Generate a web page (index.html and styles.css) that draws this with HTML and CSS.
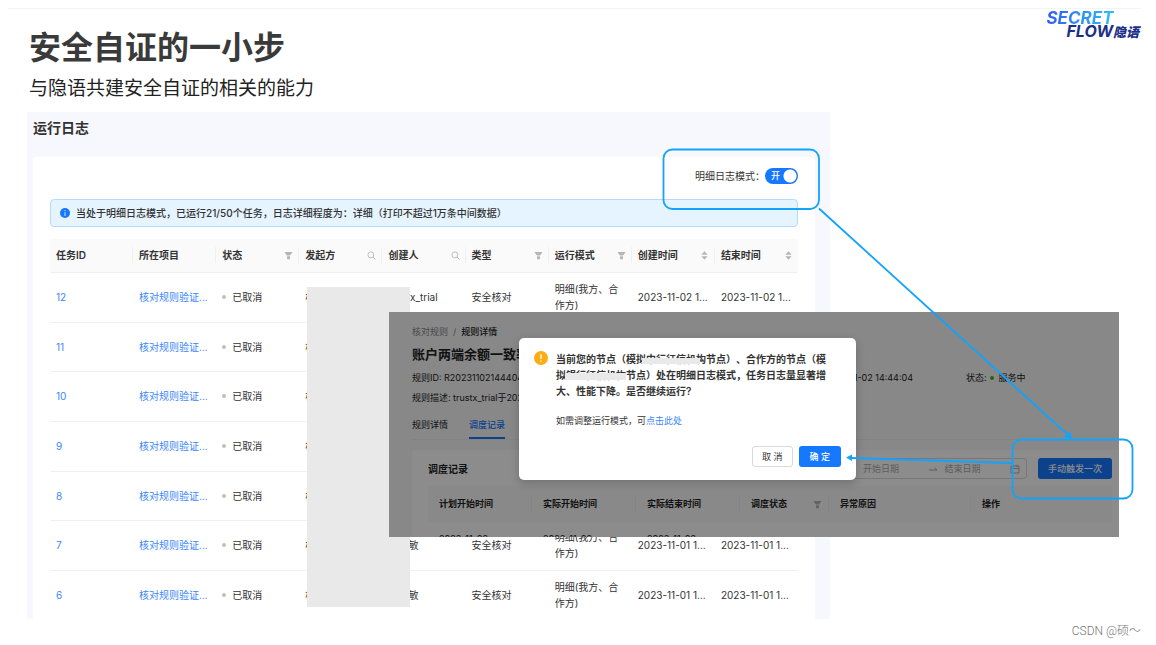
FILE: index.html
```html
<!DOCTYPE html>
<html lang="zh-CN">
<head>
<meta charset="utf-8">
<title>安全自证的一小步</title>
<link rel="stylesheet" href="styles.css">
</head>
<body>
<svg class="sprite" aria-hidden="true">
  <symbol id="filter" viewBox="0 0 10 10"><path d="M.5 1h9L6.800 5H3.200zM3.400 5.800h3.200V9.200H3.400z"/></symbol>
  <symbol id="search" viewBox="0 0 10 10"><g fill="none" stroke="currentColor" stroke-width=".9"><circle cx="4.3" cy="4.3" r="3.300"/><path d="M6.700 6.700 9.500 9.500"/></g></symbol>
  <symbol id="sort" viewBox="0 0 10 10"><path d="M5 .2 8.500 4.200h-7zM5 9.800 8.500 5.800h-7z"/></symbol>
</svg>

<div class="slide">
  <header class="slide-head">
    <div>
      <h1>安全自证的一小步</h1>
      <p class="subtitle">与隐语共建安全自证的相关的能力</p>
    </div>
    <div class="logo"><span class="logo-top">SECRET</span><span class="logo-bottom">FLOW<b>隐语</b></span></div>
  </header>

  <main class="panel">
    <h2>运行日志</h2>
    <section class="card">
      <div class="mode">
        <label for="mode">明细日志模式：</label>
        <span class="switch"><input type="checkbox" role="switch" id="mode" checked><span class="switch-text">开</span></span>
      </div>
      <div class="alert">
        <svg viewBox="0 0 10 10"><circle cx="5" cy="5" r="5" fill="#1677ff"/><path d="M5 2v1.1M5 4.2V8" stroke="#cfe4ff" stroke-width="1"/></svg>
        <span>当处于明细日志模式，已运行21/50个任务，日志详细程度为：详细（打印不超过1万条中间数据）</span>
      </div>
      <table class="log">
        <thead>
          <tr>
            <th><div>任务ID</div></th>
            <th><div>所在项目</div></th>
            <th><div>状态<svg><use href="#filter"/></svg></div></th>
            <th><div>发起方<svg><use href="#search"/></svg></div></th>
            <th><div>创建人<svg><use href="#search"/></svg></div></th>
            <th><div>类型<svg><use href="#filter"/></svg></div></th>
            <th><div>运行模式<svg><use href="#filter"/></svg></div></th>
            <th><div>创建时间<svg><use href="#sort"/></svg></div></th>
            <th><div>结束时间<svg><use href="#sort"/></svg></div></th>
          </tr>
        </thead>
        <tbody>
          <tr><td><a href="#">12</a></td><td><a href="#">核对规则验证...</a></td><td><i class="dot"></i>已取消</td><td>核</td><td>trustx_trial</td><td>安全核对</td><td>明细(我方、合作方)</td><td>2023-11-02 1...</td><td>2023-11-02 1...</td></tr>
          <tr><td><a href="#">11</a></td><td><a href="#">核对规则验证...</a></td><td><i class="dot"></i>已取消</td><td>核</td><td></td><td></td><td></td><td></td><td></td></tr>
          <tr><td><a href="#">10</a></td><td><a href="#">核对规则验证...</a></td><td><i class="dot"></i>已取消</td><td>核</td><td></td><td></td><td></td><td></td><td></td></tr>
          <tr><td><a href="#">9</a></td><td><a href="#">核对规则验证...</a></td><td><i class="dot"></i>已取消</td><td>核</td><td></td><td></td><td></td><td></td><td></td></tr>
          <tr><td><a href="#">8</a></td><td><a href="#">核对规则验证...</a></td><td><i class="dot"></i>已取消</td><td>核</td><td></td><td></td><td></td><td></td><td></td></tr>
          <tr><td><a href="#">7</a></td><td><a href="#">核对规则验证...</a></td><td><i class="dot"></i>已取消</td><td>核</td><td class="owner">敏</td><td>安全核对</td><td>明细(我方、合作方)</td><td>2023-11-01 1...</td><td>2023-11-01 1...</td></tr>
          <tr><td><a href="#">6</a></td><td><a href="#">核对规则验证...</a></td><td><i class="dot"></i>已取消</td><td>核</td><td class="owner">敏</td><td>安全核对</td><td>明细(我方、合作方)</td><td>2023-11-01 1...</td><td>2023-11-01 1...</td></tr>
        </tbody>
      </table>
    </section>
  </main>

  <div class="redaction"></div>

  <section class="window">
    <div class="window-body">
      <nav class="crumbs"><span>核对规则</span><span>/</span><b>规则详情</b></nav>
      <h3>账户两端余额一致率</h3>
      <div class="facts">
        <span>规则ID: R20231102144404</span>
        <span class="created">2023-11-02 14:44:04</span>
        <span class="state">状态:<i class="dot live"></i>服务中</span>
      </div>
      <div class="facts"><span>规则描述: trustx_trial于2023</span></div>
      <div class="tabs">
        <button type="button">规则详情</button>
        <button type="button" class="active">调度记录</button>
      </div>
      <div class="records">
        <div class="toolbar">
          <h4>调度记录</h4>
          <div class="range">
            <input type="text" placeholder="开始日期" aria-label="开始日期">
            <svg class="arrow" viewBox="0 0 10 10"><path d="M1 6h8L6.5 3.8" fill="none" stroke="currentColor"/></svg>
            <input type="text" placeholder="结束日期" aria-label="结束日期">
            <svg class="calendar" viewBox="0 0 10 10"><path d="M1 2h8v7H1zM1 4.5h8M3 .8v2M7 .8v2" fill="none" stroke="currentColor" stroke-width=".9"/></svg>
          </div>
          <button type="button" class="primary">手动触发一次</button>
        </div>
        <table class="schedule">
          <colgroup><col class="c-time"><col class="c-time"><col class="c-time"><col class="c-state"><col class="c-cause"><col></colgroup>
          <thead><tr>
            <th><div>计划开始时间</div></th><th><div>实际开始时间</div></th><th><div>实际结束时间</div></th>
            <th><div>调度状态<svg><use href="#filter"/></svg></div></th><th><div>异常原因</div></th><th><div>操作</div></th>
          </tr></thead>
          <tbody><tr><td>2023-11-02</td><td>2023-11-02</td><td>2023-11-02</td><td></td><td></td><td></td></tr></tbody>
        </table>
      </div>
    </div>
    <div class="mask"></div>
    <div class="dialog" role="dialog" aria-labelledby="dialog-title">
      <svg class="warn" viewBox="0 0 14 14"><circle cx="7" cy="7" r="7" fill="#faad14"/><path d="M7 3.2v4.6M7 9.4v1.4" stroke="#fff" stroke-width="1.3"/></svg>
      <div class="dialog-main">
        <p class="dialog-title" id="dialog-title">
          当前您的节点（模<span class="covered">拟中行征信机构</span>节点）、合作方的节点（模<br><span class="covered low">拟银行征信机构</span>节点）处在明细日志模式，任务日志量显著增<br>大、性能下降。是否继续运行?
        </p>
        <p class="hint">如需调整运行模式，可<a href="#">点击此处</a></p>
        <div class="actions">
          <button type="button" class="plain">取 消</button>
          <button type="button" class="primary">确 定</button>
        </div>
      </div>
    </div>
  </section>

  <svg class="notes" viewBox="0 0 1156 645" aria-hidden="true">
    <g fill="none" stroke="#12a3fa" stroke-width="1.800">
      <rect x="663.500" y="149.500" width="155.500" height="59.500" rx="9"/>
      <rect x="1012.500" y="439.500" width="120" height="59" rx="9"/>
      <path d="M819 208.500 1068 435M1012 463 851 458"/>
    </g>
    <path d="M1072 439 1070 431 1064 437zM846 457.500 852 454.500V461z" fill="#12a3fa"/>
  </svg>

  <footer class="credit">CSDN @硕～</footer>
</div>
</body>
</html>
```
FILE: styles.css
```css
* { box-sizing: border-box; }

body {
  margin: 0;
  background: #fff;
  color: #333;
  font: 10px/16px Inter, "Noto Sans CJK SC", sans-serif;
  text-spacing-trim: space-all;
}

h1, h2, h3, h4, p { margin: 0; }
a { color: #3a86fb; text-decoration: none; }
button, input { font: inherit; color: inherit; }
.sprite { display: none; }

.slide {
  position: relative;
  padding: 8px 15px 0 27px;
  min-height: 645px;
}

.slide::before {
  content: "";
  position: absolute;
  top: 8px;
  left: 8px;
  right: 15px;
  height: 1px;
  background: #f3f3f3;
}

.slide-head {
  display: flex;
  justify-content: space-between;
  height: 104px;
  padding-left: 2px;
}

h1 {
  padding-top: 20px;
  font-size: 32px;
  line-height: 40px;
  font-weight: 700;
  color: #3a3a3a;
}

.subtitle {
  padding-top: 7px;
  font-size: 19px;
  line-height: 28px;
  color: #222;
}

.logo {
  display: flex;
  flex-direction: column;
  padding-top: 2px;
  font-size: 16px;
  line-height: 13px;
  font-style: italic;
  font-weight: 700;
}

.logo-top {
  align-self: flex-start;
  padding: 2px 4px 0 0;
  background: linear-gradient(90deg, #2f5df0, #2fc4f8);
  background-clip: text;
  -webkit-background-clip: text;
  color: transparent;
  font-size: 17px;
}

.logo-bottom {
  padding-left: 20px;
  padding-right: 2px;
  color: #1c2f88;
}

.logo-bottom b { font-size: 13px; }

.panel {
  max-width: 803px;
  padding: 6px 15px 0 6px;
  background: #f7f8fd;
}

h2 {
  font-size: 14px;
  line-height: 20px;
  font-weight: 600;
}

.card {
  margin-top: 19px;
  padding: 9px 17px 0;
  background: #fff;
  border-radius: 4px 4px 0 0;
}

.mode {
  display: flex;
  align-items: center;
  justify-content: flex-end;
  height: 20px;
}

.switch { position: relative; display: flex; }

.switch input {
  appearance: none;
  width: 33px;
  height: 16px;
  margin: 0;
  border-radius: 8px;
  background: radial-gradient(circle at 25px 8px, #fff 6px, transparent 7px) #1677ff;
}

.switch-text {
  position: absolute;
  left: 6px;
  top: 0;
  color: #fff;
  font-size: 9px;
  font-weight: 500;
  pointer-events: none;
}

.alert {
  display: flex;
  align-items: center;
  gap: 6px;
  height: 28px;
  margin-top: 13px;
  padding: 0 9px;
  border: 1px solid #b5daff;
  border-radius: 4px;
  background: #e6f4ff;
  font-weight: 500;
}

.alert svg { width: 10px; height: 10px; }

table { border-collapse: collapse; table-layout: fixed; width: 100%; }
th, td { padding: 0; text-align: left; }

.log { margin-top: 12px; }
.log thead tr { height: 33px; background: #fafafa; }
.log tbody tr { height: 50px; }
.log tbody tr:nth-child(3n + 2) { height: 49px; }
.log th, .log td { border-bottom: 1px solid #f0f0f0; }
.log td { padding: 0 6px; }
.log tbody tr:last-child td { border-bottom: 0; }
.log tbody tr:last-child { height: 49px; }
.log td.owner { padding-left: 26px; }

th div {
  display: flex;
  align-items: center;
  justify-content: space-between;
  height: 16px;
  padding: 0 5px 0 6px;
  border-right: 1px solid #f0f0f0;
  font-weight: 600;
}

th:last-child div { border-right: 0; }
th svg { width: 9px; height: 9px; fill: #b5b5b5; color: #b0b0b0; }

.dot {
  display: inline-block;
  width: 4px;
  height: 4px;
  margin: 0 6px 2px 0;
  border-radius: 50%;
  background: #bfbfbf;
}

.redaction {
  position: absolute;
  left: 307px;
  top: 287px;
  width: 103px;
  height: 320px;
  background: #e9e9e9;
}

.window {
  position: absolute;
  left: 389px;
  top: 312px;
  width: 730px;
  height: 225px;
  overflow: hidden;
  background: #f7f8fa;
  font-size: 9px;
}

.window-body { padding: 12px 0 0 23px; color: #222; }
.mask { position: absolute; inset: 0; background: rgba(0, 0, 0, .45); }

.crumbs { display: flex; gap: 5px; color: #888; }
.crumbs b { font-weight: 500; color: #222; }

h3 {
  padding: 4px 0;
  font-size: 13px;
  line-height: 20px;
  font-weight: 600;
}

.facts { position: relative; height: 20px; line-height: 20px; }
.created { position: absolute; right: 206px; }
.state { position: absolute; left: 554px; }
.live { margin: 0 5px 1px 3px; background: #49b512; }

.tabs {
  display: flex;
  gap: 21px;
  margin-top: 7px;
  border-bottom: 1px solid #eee;
}

.tabs button {
  height: 24px;
  padding: 0 0 3px;
  border: 0;
  border-bottom: 2px solid transparent;
  background: none;
  line-height: 16px;
}

.tabs .active { color: #1677ff; border-color: #1677ff; font-weight: 500; }

.records {
  margin-top: 10px;
  padding: 8px 7px 0 16px;
  background: #fff;
  border-radius: 4px 0 0 0;
}

.toolbar { display: flex; align-items: center; height: 21px; }
h4 { font-size: 10px; font-weight: 600; margin-right: auto; }

.range {
  display: flex;
  align-items: center;
  width: 177px;
  height: 21px;
  margin-right: 11px;
  padding: 0 6px 0 12px;
  border: 1px solid #d9d9d9;
  border-radius: 3px;
  color: #aaa;
}

.range input {
  width: 66px;
  min-width: 0;
  padding: 0;
  border: 0;
  background: none;
  outline: 0;
}

.range input::placeholder { color: #aaa; opacity: 1; }
.range svg { flex: none; width: 10px; height: 10px; }
.range .arrow { margin-right: 6px; }

.primary {
  height: 21px;
  padding: 0 10px;
  border: 0;
  border-radius: 3px;
  background: #1677ff;
  color: #fff;
  font-weight: 500;
}

.schedule { margin-top: 7px; }
.schedule thead tr { height: 36px; background: #fafafa; }
.schedule th div { padding-left: 11px; padding-right: 6px; }
.schedule td { padding: 9px 11px; }
.c-time { width: 104px; }
.c-state { width: 89px; }
.c-cause { width: 142px; }

.dialog {
  position: absolute;
  left: 130px;
  top: 26px;
  display: flex;
  gap: 8px;
  width: 337px;
  padding: 13px 15px;
  border-radius: 5px;
  background: #fff;
  box-shadow: 0 3px 10px rgba(0, 0, 0, .2);
}

.warn { flex: none; width: 14px; height: 14px; }
.dialog-main { flex: 1; }

.dialog-title {
  font-size: 10px;
  font-weight: 600;
  white-space: nowrap;
}

.covered { position: relative; }

.covered::after {
  content: "";
  position: absolute;
  left: 6px;
  right: 6px;
  bottom: 1px;
  height: 6px;
  background: #e9e9e9;
}

.low::after { left: 9px; right: 0; height: 7px; }

.hint { margin-top: 14px; }

.actions {
  display: flex;
  justify-content: flex-end;
  gap: 6px;
  margin-top: 17px;
}

.actions .primary { padding: 0 11px; }

.plain {
  height: 21px;
  padding: 0 9px;
  border: 1px solid #d9d9d9;
  border-radius: 3px;
  background: #fff;
}

.notes {
  position: absolute;
  left: 0;
  top: 0;
  width: 1156px;
  height: 645px;
  pointer-events: none;
}

.credit {
  padding-top: 4px;
  text-align: right;
  font-family: Roboto, "Noto Sans CJK SC", sans-serif;
  font-size: 12px;
  font-weight: 300;
  color: #777;
}
```
